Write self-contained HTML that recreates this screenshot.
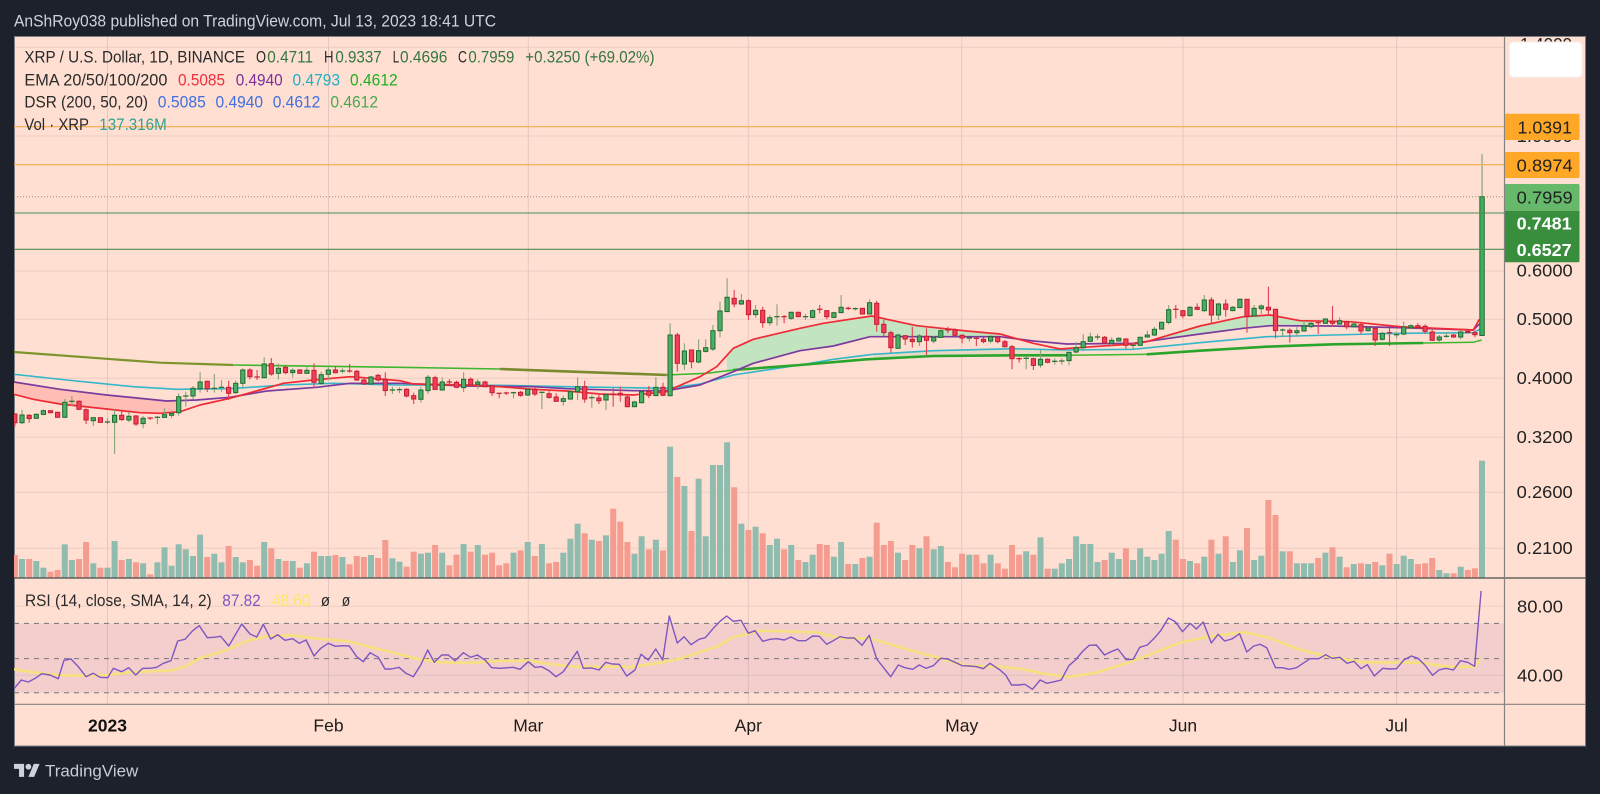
<!DOCTYPE html>
<html lang="en"><head><meta charset="utf-8"><title>XRP / U.S. Dollar chart</title>
<style>
html,body{margin:0;padding:0;background:#1d212c;width:1600px;height:794px;overflow:hidden}
svg{display:block}
text{font-family:"Liberation Sans",sans-serif;font-size:16.5px;fill:#2a2a2a}
.g{fill:#33763f}.ax{font-size:17.5px;fill:#222}
.dt{font-size:17.5px;fill:#1c1c1c;text-anchor:middle}
</style></head><body>
<svg id="s" xmlns="http://www.w3.org/2000/svg" width="1600" height="794" viewBox="0 0 1600 794">
<defs><clipPath id="c"><rect x="14" y="37" width="1490.5" height="541"/></clipPath>
<clipPath id="c2"><rect x="14" y="578" width="1490.5" height="126"/></clipPath></defs>
<rect width="1600" height="794" fill="#1d212c"/>
<text x="14" y="26.5" textLength="482" lengthAdjust="spacingAndGlyphs" style="fill:#cfd2da">AnShRoy038 published on TradingView.com, Jul 13, 2023 18:41 UTC</text>
<rect x="14.5" y="36.5" width="1571" height="709.5" fill="#ffdfd2" stroke="#7d7f84"/>
<g id="grid"></g>
<rect x="14.5" y="623.4" width="1490" height="69.3" fill="#9a5aa8" fill-opacity=".12"/>
<g id="vol" clip-path="url(#c)"></g>
<g id="fills" clip-path="url(#c)"></g>
<g id="lines" clip-path="url(#c)" fill="none" stroke-linejoin="round"></g>
<g id="cand" clip-path="url(#c)"></g>
<g fill="none">
<path d="M14 126.7H1504M14 164.7H1504" stroke="#f6a94c" stroke-width="1.1"/>
<path d="M14 196.7H1504" stroke="#8a8f7a" stroke-width="1" stroke-dasharray="1 2"/>
<path d="M14 213H1504M14 249.3H1504" stroke="#4d8c50" stroke-width="1.1"/>
<path d="M14 623.4H1504M14 658.6H1504M14 692.7H1504" stroke="#77757a" stroke-width="1" stroke-dasharray="5 5"/>
</g>
<g id="rsi" clip-path="url(#c2)" fill="none" stroke-linejoin="round"></g>
<path d="M14 578H1586" stroke="#4a4a4a" stroke-width="1.2"/>
<path d="M14 704.3H1586" stroke="#85817e" stroke-width="1.2"/>
<path d="M1504.5 36.5V746" stroke="#85817e" stroke-width="1.2"/>
<!-- legend -->
<text x="24.4" y="62.7" textLength="220.6" lengthAdjust="spacingAndGlyphs">XRP / U.S. Dollar, 1D, BINANCE</text>
<text x="256" y="62.7" textLength="10" lengthAdjust="spacingAndGlyphs">O</text><text x="267.3" y="62.7" class="g" textLength="45.7" lengthAdjust="spacingAndGlyphs">0.4711</text>
<text x="324" y="62.7" textLength="9.5" lengthAdjust="spacingAndGlyphs">H</text><text x="335.4" y="62.7" class="g" textLength="46.3" lengthAdjust="spacingAndGlyphs">0.9337</text>
<text x="392.7" y="62.7" textLength="6.5" lengthAdjust="spacingAndGlyphs">L</text><text x="400" y="62.7" class="g" textLength="47.4" lengthAdjust="spacingAndGlyphs">0.4696</text>
<text x="458" y="62.7" textLength="9" lengthAdjust="spacingAndGlyphs">C</text><text x="468.4" y="62.7" class="g" textLength="45.9" lengthAdjust="spacingAndGlyphs">0.7959</text>
<text x="525.3" y="62.7" class="g" textLength="129.2" lengthAdjust="spacingAndGlyphs">+0.3250 (+69.02%)</text>
<text x="24.4" y="85.3" textLength="143" lengthAdjust="spacingAndGlyphs">EMA 20/50/100/200</text>
<text x="178" y="85.3" textLength="47" lengthAdjust="spacingAndGlyphs" style="fill:#f0303a">0.5085</text>
<text x="235.7" y="85.3" textLength="47" lengthAdjust="spacingAndGlyphs" style="fill:#7b2f9c">0.4940</text>
<text x="292.5" y="85.3" textLength="47.5" lengthAdjust="spacingAndGlyphs" style="fill:#1fb0c4">0.4793</text>
<text x="350" y="85.3" textLength="47.7" lengthAdjust="spacingAndGlyphs" style="fill:#1fae1f">0.4612</text>
<text x="24.4" y="107.7" textLength="123.6" lengthAdjust="spacingAndGlyphs">DSR (200, 50, 20)</text>
<text x="157.8" y="107.7" textLength="48" lengthAdjust="spacingAndGlyphs" style="fill:#3f6fe0">0.5085</text>
<text x="215.5" y="107.7" textLength="47.5" lengthAdjust="spacingAndGlyphs" style="fill:#3f6fe0">0.4940</text>
<text x="272.7" y="107.7" textLength="47.6" lengthAdjust="spacingAndGlyphs" style="fill:#3f6fe0">0.4612</text>
<text x="330.4" y="107.7" textLength="47.6" lengthAdjust="spacingAndGlyphs" style="fill:#4aa84f">0.4612</text>
<text x="24.4" y="130" textLength="64.6" lengthAdjust="spacingAndGlyphs">Vol · XRP</text>
<text x="99.3" y="130" textLength="67.4" lengthAdjust="spacingAndGlyphs" style="fill:#2fa393">137.316M</text>
<text x="25" y="606" textLength="186.7" lengthAdjust="spacingAndGlyphs">RSI (14, close, SMA, 14, 2)</text>
<text x="222.3" y="606" textLength="38.4" lengthAdjust="spacingAndGlyphs" style="fill:#7e57c2">87.82</text>
<text x="271.7" y="606" textLength="39" lengthAdjust="spacingAndGlyphs" style="fill:#fdea62">48.60</text>
<text x="320.7" y="606" textLength="9.3" lengthAdjust="spacingAndGlyphs">ø</text>
<text x="341.7" y="606" textLength="8.5" lengthAdjust="spacingAndGlyphs">ø</text>
<!-- price axis -->
<text class="ax" x="1520" y="50" textLength="52" lengthAdjust="spacingAndGlyphs">1.4000</text>
<text class="ax" x="1516.7" y="142" textLength="56" lengthAdjust="spacingAndGlyphs">1.0000</text>
<text class="ax" x="1516.7" y="276.7" textLength="56" lengthAdjust="spacingAndGlyphs">0.6000</text>
<text class="ax" x="1516.7" y="325.2" textLength="56" lengthAdjust="spacingAndGlyphs">0.5000</text>
<text class="ax" x="1516.7" y="384.2" textLength="56" lengthAdjust="spacingAndGlyphs">0.4000</text>
<text class="ax" x="1516.7" y="443.2" textLength="56" lengthAdjust="spacingAndGlyphs">0.3200</text>
<text class="ax" x="1516.7" y="498.2" textLength="56" lengthAdjust="spacingAndGlyphs">0.2600</text>
<text class="ax" x="1516.7" y="554.2" textLength="56" lengthAdjust="spacingAndGlyphs">0.2100</text>
<text class="ax" x="1517" y="612.3" textLength="46" lengthAdjust="spacingAndGlyphs">80.00</text>
<text class="ax" x="1517" y="681.3" textLength="46" lengthAdjust="spacingAndGlyphs">40.00</text>
<rect x="1509.3" y="42" width="72.7" height="35.3" rx="4" fill="#fff" stroke="#f3ece9"/>
<path d="M1505 113.7h73a1.5 1.5 0 0 1 1.5 1.5V138.5a1.5 1.5 0 0 1-1.5 1.5h-73z" fill="#ffa726"/>
<path d="M1505 152h73a1.5 1.5 0 0 1 1.5 1.5V176.5a1.5 1.5 0 0 1-1.5 1.5h-73z" fill="#ffa726"/>
<path d="M1505 184h73a1.5 1.5 0 0 1 1.5 1.5V210.7H1505z" fill="#66b86a"/>
<path d="M1505 210.7H1579.5V260.8a1.5 1.5 0 0 1-1.5 1.5H1505z" fill="#388e3c"/>
<text class="ax" x="1517.5" y="133.3" textLength="54.5" lengthAdjust="spacingAndGlyphs">1.0391</text>
<text class="ax" x="1516.7" y="171.7" textLength="56" lengthAdjust="spacingAndGlyphs">0.8974</text>
<text class="ax" x="1516.7" y="203.5" textLength="56" lengthAdjust="spacingAndGlyphs">0.7959</text>
<text class="ax" x="1516.7" y="229.5" textLength="55" lengthAdjust="spacingAndGlyphs" style="fill:#fff;font-weight:bold">0.7481</text>
<text class="ax" x="1516.7" y="256" textLength="55" lengthAdjust="spacingAndGlyphs" style="fill:#fff;font-weight:bold">0.6527</text>
<!-- time axis -->
<text class="dt" x="107.5" y="731.7" style="font-weight:bold;fill:#111">2023</text>
<text class="dt" x="328.5" y="731.7">Feb</text>
<text class="dt" x="528.3" y="731.7">Mar</text>
<text class="dt" x="748.3" y="731.7">Apr</text>
<text class="dt" x="961.7" y="731.7">May</text>
<text class="dt" x="1183" y="731.7">Jun</text>
<text class="dt" x="1396.6" y="731.7">Jul</text>
<!-- footer -->
<g transform="translate(14 761) scale(.72)" fill="#cfd2da"><path d="M14 22H7V11H0V4h14v18zM28 22h-8l7.5-18h8L28 22z"/><circle cx="20" cy="8" r="4"/></g>
<text x="45" y="776.7" textLength="93.3" lengthAdjust="spacingAndGlyphs" style="font-size:17px;fill:#c9ccd4">TradingView</text>
</svg>
<script>
(function(){
var X=function(d){return 107.5+7.122*d};
var Z={3:[3,0,330],4:[3,400,260],5:[3,800,260],6:[3,1200,260],7:[3,0,560],8:[3,500,560],9:[2.613,1000,560]};
function P(z,s){var c=Z[z];return s.trim().split(/\s+/).map(function(p){var a=p.split(',');return (c[1]+a[0]/c[0]).toFixed(1)+','+(c[2]+a[1]/3).toFixed(1)})}
function L(){var o=[];for(var i=0;i<arguments.length;i+=2)o=o.concat(P(arguments[i],arguments[i+1]));return o}
function $(i){return document.getElementById(i)}
/* grid */
var g='';[47.3,136,271,319.3,378.3,437.3,492.3,548.3,606.3,675.3].forEach(function(y){g+='<path d="M15 '+y+'H1504" stroke="#eccec3" stroke-width="1"/>'});
[107.5,328.5,528.3,748.3,961.7,1183,1396.6].forEach(function(x){g+='<path d="M'+x+' 37V704" stroke="#e4c7be" stroke-width="1"/>'});
$('grid').innerHTML=g;
/* candles: colour hi,top,bot,lo */
var C3="r250,252,278,290 g240,255,278,282 r252,256,266,278 g250,253,265,267 g238,242,253,256 r241,242,248,250 r245,247,262,263 g207,217,262,263 g198,214,217,228 r211,214,238,240 r235,239,270,282 g262,263,272,288 r262,263,277,278 g265,276,278,283 g238,256,277,372 r244,256,269,272 g246,259,270,276 r255,258,282,288 g258,265,281,295 r262,264,267,270 g258,262,264,283 g235,254,262,263 g242,250,256,264 g190,200,248,257 g185,198,201,230 g168,175,198,208 g127,156,176,188 r152,154,176,186 g132,175,178,188 g150,172,174,185 r152,172,190,210 g152,160,188,192 g115,120,160,172 r115,120,140,148 r120,141,143,150 g82,102,143,145 r84,101,132,137 g100,115,130,148 r108,112,128,133 g115,121,128,143 r117,120,130,132 g110,121,130,132 r100,121,157,172 g125,134,160,165 g112,120,133,150 r108,120,128,130 g115,123,125,130 r102,123,125,128 r120,124,150,153 r140,150,162,165 g138,141,162,164 r132,136,150,155 r127,148,182,198 g170,180,182,192 g172,179,181,190";
var C4="r385,388,408,412 r398,407,417,432 g380,390,418,428 g345,352,392,402 r347,353,388,390 g352,366,390,392 r358,366,368,375 r362,367,382,384 g337,358,383,396 r352,358,375,380 g358,366,373,387 r362,366,380,382 r375,377,398,408 r398,400,402,415 r395,399,401,405 g395,398,400,415 r393,397,406,410 g385,388,405,408 r380,388,402,408 g395,397,399,447 r390,401,412,416 r400,411,424,426 g407,416,424,437 g390,395,417,420 g352,380,395,420 r362,380,417,428 g405,413,415,443 r400,414,422,432 g400,404,420,450 r385,403,405,440 r380,400,405,425 r405,411,440,442 g422,426,440,441 g392,395,428,430 r378,394,406,414 g352,382,407,408 r368,382,406,408 g190,225,407,408 r218,225,310,335 g250,273,312,330 r270,270,305,325 g238,272,306,310 g238,263,274,278 g195,212,267,273 g125,153,212,232 g55,112,155,155 r90,115,132,142 g102,122,132,135 r118,122,164,180 g135,151,164,173 r140,151,188,203 g165,173,188,197 g133,170,173,197 r165,170,172,190 g155,157,175,180 r155,157,170,172";
var C5="g162,170,172,180 g148,152,172,175 r135,148,150,160 r150,152,170,178 g155,158,172,174 g105,142,158,160 r140,145,147,150 g142,146,148,152 r145,145,162,164 g118,128,162,163 r122,130,193,215 r180,193,218,230 r212,218,263,278 g222,225,265,267 r225,227,237,255 r200,238,245,263 g222,228,245,258 r205,229,241,285 g228,232,243,250 g208,212,232,234 r200,210,212,220 r205,210,226,230 r222,226,234,250 g232,234,237,245 r232,235,237,258 r232,238,245,250 g225,230,243,250 r230,232,245,250 r240,245,260,262 r255,260,296,328 r292,296,298,308 g290,295,298,328 r293,296,316,330 g270,298,315,323 r295,298,307,310 g295,304,306,314 g295,303,305,314 g275,277,302,316 g245,263,276,280 g222,245,263,272 g218,231,244,246 g222,231,233,240 r228,232,249,250 g232,241,250,260 g232,235,243,245 r235,237,256,266 g250,256,258,270 g230,232,256,258 g212,225,231,233 g200,208,225,228 g185,187,207,209 g135,149,187,193 r135,148,150,175 r150,152,167,175 g138,142,167,170 r130,142,148,150";
var C6="g105,120,152,155 r112,120,165,188 g128,132,165,180 r118,132,148,170 g138,142,152,154 g115,118,143,145 r118,118,170,218 g135,145,168,170 g133,138,146,162 r80,142,150,165 r148,148,212,235 g205,210,212,232 r205,211,218,248 g200,212,218,228 g182,198,213,215 g185,190,200,205 r180,188,190,222 g175,177,190,192 r138,183,190,200 g172,182,192,198 r182,185,200,208 g188,192,200,203 r190,194,213,222 g200,204,212,214 r203,205,240,258 g215,220,238,242 r203,218,220,258 g215,224,226,235 g185,201,222,225 g193,197,203,208 r190,197,202,205 r193,199,214,222 r205,216,241,243 g225,231,240,245 g218,229,231,233 r222,225,231,233 g212,216,231,238 r212,214,218,220 r212,218,224,232";
var c='',d=-13;
function cand(str,y0){str.split(' ').forEach(function(t){
 var col=t[0],a=t.slice(1).split(',').map(function(v){return y0+v/3}),x=X(d);
 var w=col=='g'?'#86a276':'#e2404f',f=col=='g'?'#4caf68':'#f23f55',b=col=='g'?'#1f6a2e':'#c11e32';
 c+='<path d="M'+x.toFixed(1)+' '+a[0].toFixed(1)+'V'+a[3].toFixed(1)+'" stroke="'+w+'" stroke-width="1.1"/>';
 if(a[2]-a[1]<1.2)c+='<path d="M'+(x-2.7).toFixed(1)+' '+a[1].toFixed(1)+'h5.4" stroke="'+b+'" stroke-width="1.2"/>';
 else c+='<rect x="'+(x-2.1).toFixed(1)+'" y="'+a[1].toFixed(1)+'" width="4.2" height="'+(a[2]-a[1]).toFixed(1)+'" fill="'+f+'" stroke="'+b+'" stroke-width="1"/>';
 d++;});}
cand(C3,330);cand(C4,260);cand(C5,260);cand(C6,260);
var xl=X(193);
c+='<path d="M'+xl+' 154V197" stroke="#8ba67a" stroke-width="1.2"/><rect x="'+(xl-2.2)+'" y="196.7" width="4.4" height="138.8" fill="#43ad62" stroke="#1f6a2e" stroke-width="1"/>';
$('cand').innerHTML=c;
/* volume tops */
var V3="r675 g687 r687 g693 g713 r725 r720 g643 g690 r687 r636 g700 r713 g713 g633 r690 g687 r697 g700 r733 g697 g652 g707 g643 g658 g678 g614 r681 g671 g697 r648 g681 g697 r690 r707 g636 r655 g687 r693 g693 r713 g700 r665 g678 g678 r675 g681 r703 r678 r681 g675 r684 r630 g685 g695";
var V4="r920 r875 g881 g878 r855 g878 r916 r884 g852 r875 g855 r884 r878 r916 r910 g878 r871 g846 r888 g852 r910 r906 g878 g836 g791 r820 g839 r843 g826 r746 r785 r846 g881 g829 r868 g839 r871 g560 r651 g678 r813 g656 g829 g615 g615 g547 r682 g791 r810 g800 r820 g855 g836 r868 g855 r900";
var V5="g906 g884 r852 r855 g890 g846 r912 g912 r894 g890 r788 r855 r843 g878 r900 r855 g865 r829 g868 g858 r906 r922 r881 g884 r884 r910 g884 r910 r926 r855 r884 g874 r884 g832 r926 g926 g910 g897 g829 g852 g852 g906 r900 g878 g897 r865 g900 g865 g890 g900 g881 g813 r839 r897 g903 r910";
var V6="g890 r839 g881 r829 g906 g871 r804 g900 g887 r720 r765 g874 r874 g910 g910 g910 r894 g878 r862 g890 r922 g912 r910 g912 r906 g916 r881 g912 g887 g897 r912 r910 r894 g930 g940 r940 g920 r930 r925 g602";
var v='';d=-13;
function vol(s,y0){s.split(' ').forEach(function(t){var y=y0+t.slice(1)/3,x=X(d);
 v+='<rect x="'+(x-3).toFixed(1)+'" y="'+y.toFixed(1)+'" width="6" height="'+(578-y).toFixed(1)+'" fill="'+(t[0]=='g'?'#8fbcae':'#f59c90')+'"/>';d++;});}
vol(V3,330);vol(V4,260);vol(V5,260);vol(V6,260);
$('vol').innerHTML=v;
/* MA lines */
var red=L(3,"42,193 100,208 180,222 320,237 420,248 480,250 540,245 600,225 690,205 780,180 850,160 940,150 1050,140 1090,143 1200,152",4,"40,372 200,375 300,380 400,388 500,393 600,402 700,405 800,395 820,385 900,350 950,320 1000,265 1060,238 1200,205",5,"70,190 215,168 350,197 500,213 600,222 700,250 780,267 850,262 1000,252 1040,245 1200,198",6,"130,170 210,165 300,182 450,185 600,200 820,210 838,178");
var pur=L(3,"42,156 180,178 320,195 500,213 590,210 690,202 800,183 950,172 1050,160 1200,160",4,"200,378 400,380 500,386 700,392 800,392 900,375 1000,335 1060,310 1200,272",5,"100,258 210,230 400,230 600,230 700,243 800,252 1000,250 1200,222",6,"130,205 210,197 400,198 600,203 820,210 845,185");
var cy=L(3,"42,133 200,150 400,170 530,178 690,176 850,165 1000,160 1200,165",4,"300,376 500,380 800,385 900,372 1000,345 1200,315",5,"100,298 220,283 400,272 640,266 800,270 1000,268 1200,248",6,"200,230 400,225 600,220 820,218 845,205");
function poly(pts,col,w){return '<polyline points="'+pts.join(' ')+'" stroke="'+col+'" stroke-width="'+w+'"/>'}
function fill(top,bot,col){return '<polygon points="'+top.concat(bot.slice().reverse()).join(' ')+'" fill="'+col+'"/>'}
var f='';
f+=fill(L(3,"42,156 180,178 320,195 500,213 530,212"),L(3,"42,193 100,208 180,222 320,237 420,248 480,250 530,247"),'#ffbdb5');
f+=fill(L(4,"980,285 1000,265 1060,238 1200,205",5,"70,190 215,168 350,197 500,213 600,222"),L(4,"980,340 1060,310 1200,272",5,"100,258 210,230 400,230 600,230"),'#c3e4c0');
f+=fill(L(5,"1040,245 1200,198",6,"130,170 210,165 300,182 330,184"),L(5,"1040,245 1200,222",6,"130,205 210,197 330,198"),'#c3e4c0');
f+=fill(L(5,"220,283 400,272 640,266 800,270"),L(5,"220,297 400,288 640,286 800,286"),'#e7d9c4');
$('fills').innerHTML=f;
var l='';
l+=poly(cy,'#35b7c9',1.6);
l+=poly(L(3,"42,66 300,85 480,98 700,105"),'#7d942c',2.2);
l+=poly(L(3,"700,105 1200,112",4,"300,327"),'#3db82e',1.6);
l+=poly(L(4,"300,327 800,345"),'#7b8a2c',2.6);
l+=poly(L(4,"800,345 920,340 1000,330"),'#3db82e',1.6);
l+=poly(L(4,"1000,330 1200,315",5,"200,298 400,288 640,286 800,286"),'#2aa52c',2.6);
l+=poly(L(5,"800,286 1040,283"),'#3db82e',1.5);
l+=poly(L(5,"1040,283 1200,272",6,"200,260 400,253 670,249"),'#2aa52c',2.6);
l+=poly(L(6,"670,249 820,247 845,240"),'#3db82e',1.5);
l+=poly(pur,'#7a3b9e',1.7);
l+=poly(red,'#ee2b35',1.7);
$('lines').innerHTML=l;
/* RSI */
var rs=L(7,"42,386 64,360 85,366 106,355 125,341 150,345 175,356 192,301 213,297 235,320 258,350 280,340 300,352 323,353 340,325 365,335 386,323 407,345 428,325 450,325 470,322 490,310 513,302 533,243 555,238 578,212 598,197 622,233 642,232 662,229 686,258 725,192 750,222 770,231 790,193 812,237 833,224 855,241 878,236 898,250 918,240 942,288 962,265 985,250 1006,259 1027,257 1048,258 1070,290 1090,305 1110,278 1135,292 1155,327 1175,327 1197,322 1218,340 1240,350 1262,315 1283,270 1303,307 1325,285 1345,285 1365,302 1390,278 1412,292 1432,285 1455,300 1475,323 1500,325",
8,"40,322 60,328 85,305 105,322 125,320 147,332 168,350 190,335 232,274 250,325 275,324 297,330 317,307 337,312 358,313 380,348 405,330 423,283 445,300 467,267 488,300 508,168 532,249 552,230 573,254 597,238 616,233 640,205 660,184 680,168 700,184 723,181 745,220 765,212 788,244 810,238 830,236 853,240 873,231 895,242 917,242 938,228 958,229 980,253 1000,242 1020,230 1040,234 1063,234 1086,256 1108,226 1130,297 1150,322 1172,350 1195,315 1215,323 1238,328 1258,315 1278,325 1300,317 1322,295 1343,297 1365,307 1387,317 1408,318 1430,320 1450,326 1470,310 1500,330",
9,"15,345 30,375 48,375 65,373 85,388 105,360 122,370 142,365 160,360 180,317 197,300 217,273 233,256 252,255 273,285 290,275 308,267 330,299 348,298 365,262 385,255 403,235 420,212 440,174 458,185 477,215 497,190 513,207 531,186 552,249 570,223 587,243 606,237 626,221 645,276 663,258 680,253 697,263 720,323 738,323 755,328 775,323 792,310 810,296 833,296 851,284 868,295 888,292 907,310 925,304 943,326 960,314 978,348 1000,325 1018,327 1036,326 1055,300 1075,288 1092,295 1110,315 1130,346 1147,330 1165,325 1185,330 1203,302 1222,307 1240,319 1257,93");
var ma=L(7,"42,328 100,337 150,343 200,346 250,347 320,345 400,336 510,332 550,322 600,295 680,270 740,243 800,228 880,226 950,236 1040,243 1110,261 1180,278 1250,296 1320,307 1400,309 1500,303",
8,"85,302 150,312 220,320 300,320 400,320 480,308 540,296 650,260 700,232 780,212 880,215 950,217 1020,235 1110,235 1200,262 1320,295 1400,317 1500,320",
9,"60,328 120,342 180,351 250,338 330,310 400,280 470,248 550,229 640,217 700,232 780,268 850,288 950,307 1100,308 1170,320 1240,320 1257,298");
$('rsi').innerHTML=poly(ma,'#f6e07f',2.6)+poly(rs,'#7e57c2',1.4);
})();
</script>
</body></html>
